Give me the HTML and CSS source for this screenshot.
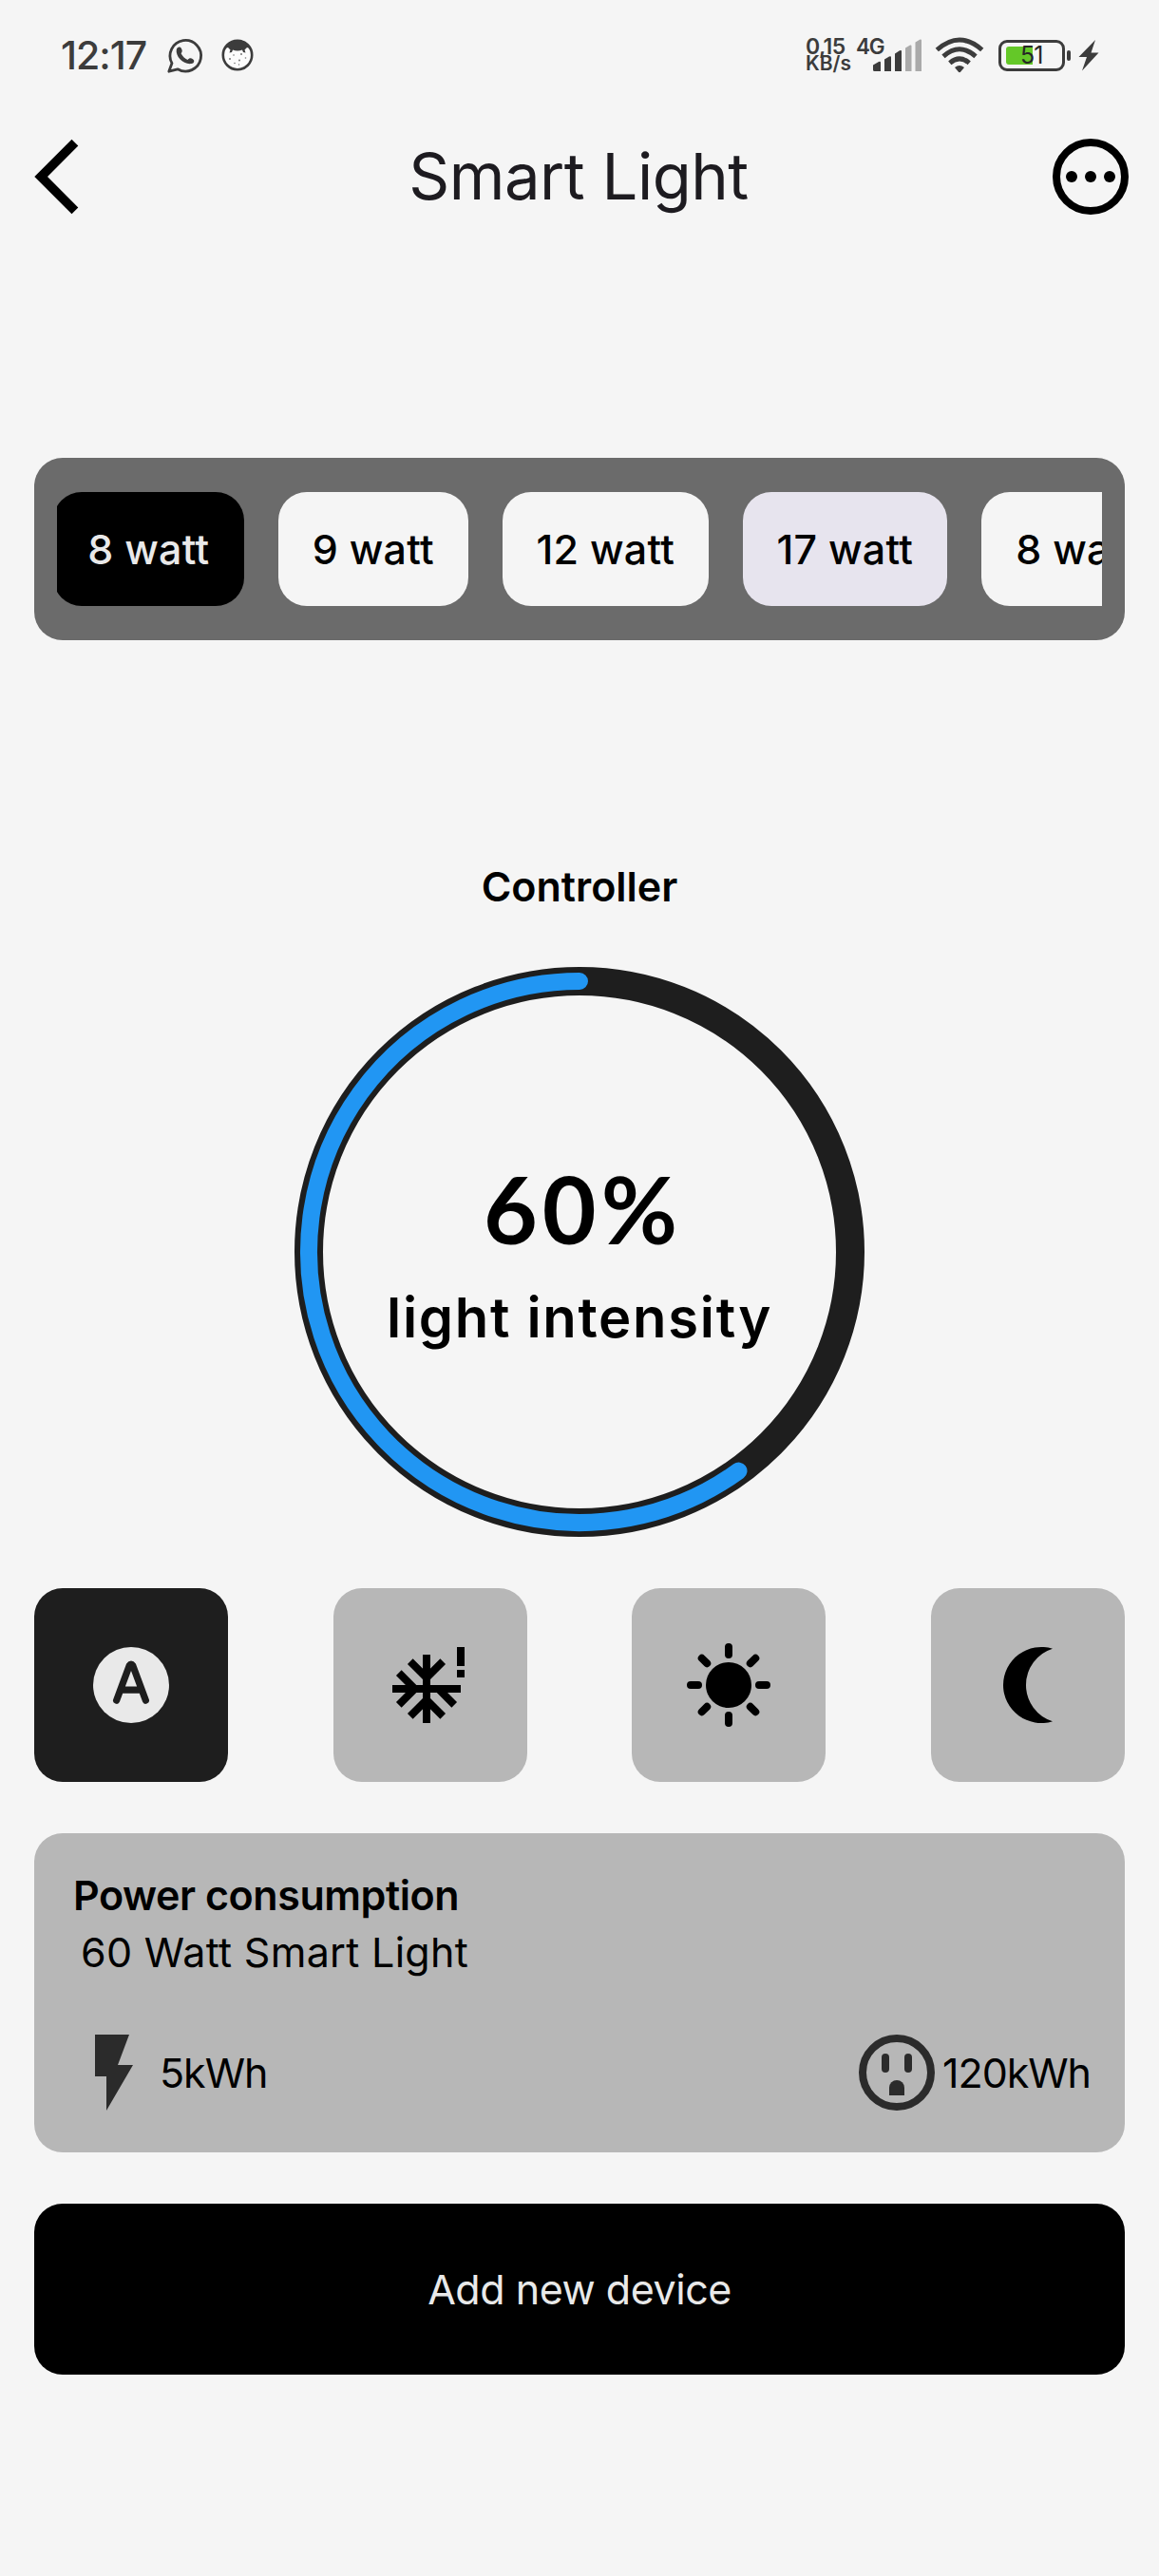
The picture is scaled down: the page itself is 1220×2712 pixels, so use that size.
FILE: index.html
```html
<!DOCTYPE html>
<html lang="en">
<head>
<meta charset="utf-8">
<title>Smart Light</title>
<link rel="stylesheet" href="styles.css">
</head>
<body>
<div class="status">
  <span class="time">12:17</span>
  <svg class="whatsapp" width="37" height="37" viewBox="0 0 37 37" fill="none" stroke="#3c3c3c" stroke-width="2.8">
    <path d="M5 26.600A16.300 16.300 0 1 1 11 32.800L1.800 35.200Z" stroke-linejoin="round"/>
    <path d="M9.800 12C10.500 9.200 13.500 8.600 14.800 10.800C16.200 13.300 16 14.500 14.600 16.300C16 19.300 18.500 21.600 21.500 22.900C23.200 21 24.800 20.700 27 22.200C29.300 23.800 28.300 26.600 25.600 27.100C17.500 28.500 8.400 19.500 9.800 12Z" fill="#3c3c3c" stroke="none"/>
  </svg>
  <svg class="face" width="34" height="34" viewBox="0 0 34 34">
    <circle cx="17" cy="17" r="15.200" fill="#fcfcfc" stroke="#3c3c3c" stroke-width="2.600"/>
    <path d="M3.500 10Q8 1.500 17 1.500T30.500 10L27 9 24.500 11.500 25.500 14.500 23 14 22 11.500Q17 13.500 12 11.500L11 14 8.500 14.500 9.500 11.500 7 9Z" fill="#3c3c3c"/>
    <g fill="#777"><circle cx="9" cy="21" r="1"/><circle cx="13" cy="17" r=".8"/><circle cx="21" cy="16" r="1"/><circle cx="19" cy="22.500" r="1"/><circle cx="25.500" cy="20" r=".8"/><circle cx="14" cy="25.500" r=".8"/><circle cx="18.500" cy="27" r=".7"/></g>
  </svg>
  <div class="speed"><span class="rate">0,15</span><span class="unit">KB/s</span></div>
  <span class="net">4G</span>
  <svg class="signal" width="52" height="36" viewBox="0 0 52 36" fill="#3c3c3c">
    <path d="M0 28.500L6 25Q8 24 8 26V35H1.500Q0 35 0 33.500ZM12 22.500L17 19.500Q19 18.500 19 20.500V35H12ZM23 16.500L28 13.300Q30 12.500 30 14V35H23Z"/>
    <path d="M34 10.500L39 7.500Q40.500 7 40.500 8.500V35H34ZM44.500 4.500L49.500 1.500Q51 1 51 2.500V35H44.500Z" fill="#aaa"/>
  </svg>
  <svg class="wifi" width="52" height="38" viewBox="0 0 52 38" fill="none" stroke="#3c3c3c" stroke-width="5">
    <path d="M2.300 13.500Q26-7.500 49.700 13.500M9 20.300Q26 5.200 43 20.300M15.800 27.300Q26 18.500 36.200 27.300"/>
    <path d="M21 32Q26 28 31 32L27.500 36.300Q26 38 24.500 36.300Z" fill="#3c3c3c" stroke="none"/>
  </svg>
  <div class="battery"><div class="shell"><div class="charge"></div><span class="percent">51</span></div><div class="nub"></div></div>
  <svg class="plugged" width="22" height="33" viewBox="0 0 22 33" fill="#3c3c3c"><path d="M18 0L.5 18H9L4 32.500 21.500 13.500H13.500Z"/></svg>
</div>

<header class="header">
  <svg width="46" height="80" viewBox="0 0 46 80"><path d="M39.500.7L46.300 7.500 14 40 46.300 72.500 39.500 79.300.3 40Z"/></svg>
  <h1 class="title">Smart Light</h1>
  <svg width="80" height="80" viewBox="0 0 80 80"><circle cx="40" cy="40" r="36" fill="none" stroke="#000" stroke-width="8"/><circle cx="20" cy="40" r="6"/><circle cx="40" cy="40" r="6"/><circle cx="60" cy="40" r="6"/></svg>
</header>

<nav class="watts">
  <div class="chips">
    <button class="chip chip-active">8 watt</button>
    <button class="chip">9 watt</button>
    <button class="chip chip-12">12 watt</button>
    <button class="chip chip-17">17 watt</button>
    <button class="chip">8 watt</button>
  </div>
</nav>

<h2 class="section-title">Controller</h2>
<div class="dial">
  <svg class="ring" width="600" height="600" viewBox="0 0 600 600" fill="none">
    <circle cx="300" cy="300" r="285" stroke="#1e1e1e" stroke-width="30"/>
    <path d="M300 15A285 285 0 1 0 467.500 530.600" stroke="#2196f3" stroke-width="18" stroke-linecap="round"/>
  </svg>
  <div class="value">60%</div>
  <div class="caption">light intensity</div>
</div>

<div class="modes">
  <button class="mode mode-active">
    <svg width="96" height="96" viewBox="0 0 24 24"><circle cx="12" cy="12" r="10" fill="#e9e9e9"/><path d="M8.150 16.050L11.550 6.850Q12 6.150 12.450 6.850L15.850 16.050M9.500 13.300H14.500" fill="none" stroke="#1e1e1e" stroke-width="1.800" stroke-linecap="round" stroke-linejoin="round"/></svg>
  </button>
  <button class="mode">
    <svg width="96" height="96" viewBox="0 0 24 24"><path d="M11 4V22M2 13H20M6.700 5.800L11 10.100 15.300 5.800M6.700 20.200L11 15.900 15.300 20.200M3.700 8.800L7.900 13 3.700 17.200M14.100 13L18.300 17.200" fill="none" stroke="#000" stroke-width="2"/><path d="M19 2H21V7H19ZM19 8H21V10H19Z"/></svg>
  </button>
  <button class="mode">
    <svg width="96" height="96" viewBox="0 0 24 24"><circle cx="12" cy="12" r="6"/><path d="M12 2V4M12 20V22M2 12H4M20 12H22M4.930 4.930L6.300 6.300M17.700 17.700L19.070 19.070M4.930 19.070L6.300 17.700M17.700 6.300L19.070 4.930" stroke="#000" stroke-width="2" stroke-linecap="round"/></svg>
  </button>
  <button class="mode">
    <svg width="96" height="96" viewBox="0 0 24 24"><path d="M5.500 12a10 10 0 0 0 13 9.540 10 10 0 0 1 0-19.080A10 10 0 0 0 5.500 12Z"/></svg>
  </button>
</div>

<section class="power">
  <h3 class="power-title">Power consumption</h3>
  <p class="power-sub">60 Watt Smart Light</p>
  <div class="power-row">
    <div class="stat">
      <svg width="96" height="96" viewBox="0 0 24 24" fill="#2b2b2b"><path d="M7 2V13H10V22L17 10H13L16 2Z"/></svg>
      <span>5kWh</span>
    </div>
    <div class="stat">
      <svg width="96" height="96" viewBox="0 0 24 24" fill="#2b2b2b"><circle cx="12" cy="12" r="9" fill="none" stroke="#2b2b2b" stroke-width="2"/><rect x="8" y="7" width="2" height="5" rx="1"/><rect x="14" y="7" width="2" height="5" rx="1"/><path d="M10 18V16A2 2 0 0 1 14 16V18Z"/></svg>
      <span>120kWh</span>
    </div>
  </div>
</section>

<button class="add">Add new device</button>
</body>
</html>
```
FILE: styles.css
```css
* { box-sizing: border-box; }
body {
  margin: 0;
  height: 2712px;
  padding: 0 36px;
  background: #f5f5f5;
  color: #000;
  font-family: Inter, "Liberation Sans", sans-serif;
  font-size: 43px;
  line-height: 60px;
  display: flex;
  flex-direction: column;
}
h1, h2, h3, p { margin: 0; font-size: inherit; font-weight: 400; }
button { border: 0; padding: 0; font: inherit; color: inherit; }
svg { display: block; flex: none; overflow: visible; }

/* Status bar */
.status { height: 116px; display: flex; align-items: center; padding-left: 28px; color: #3c3c3c; }
.time { width: 112px; font-size: 41px; font-weight: 500; letter-spacing: -1px; }
.face { margin-left: 20px; }
.speed { width: 53px; margin-left: 581px; display: flex; flex-direction: column; font-weight: 600; }
.rate { font-size: 23px; line-height: 18px; letter-spacing: -0.6px; }
.unit { font-size: 21px; line-height: 18px; }
.net { width: 18px; font-size: 22.5px; font-weight: 600; line-height: 18px; letter-spacing: -1.3px; margin-bottom: 18px; white-space: nowrap; }
.wifi { margin-left: 13px; }
.battery { margin-left: 15px; display: flex; align-items: center; gap: 2px; }
.shell { position: relative; width: 70px; height: 33px; padding: 4px 5px; border: 3px solid #3c3c3c; border-radius: 9px; }
.charge { width: 28px; height: 19px; background: #64c828; border-radius: 3px 0 0 3px; }
.percent { position: absolute; left: 20px; top: 4px; font-size: 25px; line-height: 19px; letter-spacing: -1px; color: #262626; }
.nub { width: 4px; height: 11px; border-radius: 2px; background: #3c3c3c; }
.plugged { margin-left: 8px; }

/* Header */
.header { height: 140px; margin-right: -4px; display: flex; align-items: center; justify-content: space-between; }
.title { margin-left: 28px; color: #1d1b20; font-size: 67px; line-height: 80px; letter-spacing: -0.5px; }

/* Wattage chips */
.watts { height: 192px; margin-top: 226px; padding: 36px 24px; border-radius: 30px; background: #6b6b6b; }
.chips { display: flex; gap: 36px; height: 120px; overflow: hidden; }
.chip { flex: none; width: 200.5px; border-radius: 30px; background: #f5f5f5; font-weight: 500; letter-spacing: 0.25px; }
.chip-active { margin-left: -4px; background: #000; color: #e9e9e9; }
.chip-12 { width: 216.5px; }
.chip-17 { width: 215.5px; background: #e7e4ee; }

/* Intensity dial */
.section-title { margin-top: 229px; text-align: center; font-weight: 600; }
.dial { position: relative; align-self: center; width: 600px; height: 600px; margin-top: 55px; padding-top: 198px; text-align: center; font-weight: 600; }
.ring { position: absolute; left: 0; top: 0; }
.value { font-family: Lato, sans-serif; font-size: 98px; line-height: 112px; font-weight: 700; letter-spacing: 5px; text-indent: 7px; }
.caption { font-size: 58px; line-height: 119px; letter-spacing: 1.7px; }

/* Mode tiles */
.modes { margin-top: 54px; display: flex; justify-content: space-between; }
.mode { width: 204px; height: 204px; border-radius: 30px; background: #b7b7b7; display: flex; align-items: center; justify-content: center; }
.mode-active { background: #1e1e1e; }

/* Power card */
.power { height: 336px; margin-top: 54px; padding: 35px 36px 36px; border-radius: 30px; background: #b7b7b7; }
.power-title { margin-left: 5px; font-weight: 600; letter-spacing: -0.45px; }
.power-sub { margin-left: 13px; letter-spacing: 0.3px; }
.power-row { margin-top: 49px; display: flex; justify-content: space-between; }
.stat { display: flex; align-items: center; letter-spacing: -1.05px; }

.add { height: 180px; margin-top: 54px; border-radius: 30px; background: #000; color: #e9e9e9; letter-spacing: -0.46px; }
```
